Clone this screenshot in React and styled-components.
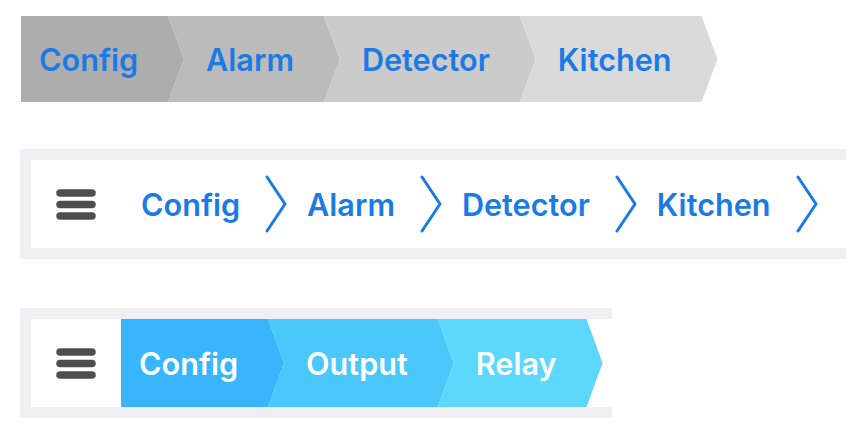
import React from 'react';
import styled, { createGlobalStyle } from 'styled-components';

const GlobalStyle = createGlobalStyle`
    body {
        margin: 0;
        background: #ffffff;
        font-family: Inter, "Liberation Sans", sans-serif;
    }
`;

const Page = styled.div`
    display: flex;
    flex-direction: column;
    align-items: flex-start;
    padding: 16px 0 0 20px;
`;

const ArrowBar = styled.div`
    display: flex;
    height: 86px;
    margin-left: 1px;
`;

const Segment = styled.div`
    display: flex;
    align-items: center;
    background: ${(p) => p.$bg};
    color: ${(p) => p.$color};
    font-size: 30.6px;
    font-weight: 600;
    padding-left: ${(p) => (p.$first ? '18px' : '38px')};
    padding-right: 46px;
    margin-left: ${(p) => (p.$first ? '0' : '-16px')};
    clip-path: ${(p) =>
        p.$first
            ? 'polygon(0 0, calc(100% - 16px) 0, 100% 50%, calc(100% - 16px) 100%, 0 100%)'
            : 'polygon(0 0, calc(100% - 16px) 0, 100% 50%, calc(100% - 16px) 100%, 0 100%, 16px 50%)'};
`;

const Frame = styled.div`
    display: flex;
    width: ${(p) => p.$width}px;
    box-sizing: border-box;
    border: 11px solid #efeff4;
    border-right: 0;
    background: #ffffff;
`;

const Inner = styled.div`
    display: flex;
    align-items: stretch;
    height: 88px;
`;

const MenuBox = styled.div`
    display: flex;
    align-items: center;
    width: 90px;
    padding-left: 25px;
    box-sizing: border-box;
    flex-shrink: 0;
`;

const Crumbs = styled.div`
    display: flex;
    align-items: center;
    padding-left: 20px;
`;

const CrumbText = styled.span`
    color: #1a7ae6;
    font-size: 30.6px;
    font-weight: 600;
`;

const Sep = styled.svg`
    margin: 0 20px 0 25px;
    flex-shrink: 0;
`;

function Hamburger() {
    return (
        <svg width='40' height='31' viewBox='0 0 40 31'>
            <g stroke='#4f4f4f' strokeWidth='7.5' strokeLinecap='round'>
                <line x1='4' y1='4' x2='36' y2='4' />
                <line x1='4' y1='15.5' x2='36' y2='15.5' />
                <line x1='4' y1='27' x2='36' y2='27' />
            </g>
        </svg>
    );
}

function Chevron() {
    return (
        <Sep width='22' height='58' viewBox='0 0 22 58'>
            <path
                d='M2 2 L20 29 L2 56'
                fill='none'
                stroke='#1a7ae6'
                strokeWidth='3'
                strokeLinecap='round'
                strokeLinejoin='round'
            />
        </Sep>
    );
}

const grey = [
    { label: 'Config', bg: '#adadad' },
    { label: 'Alarm', bg: '#bbbbbb' },
    { label: 'Detector', bg: '#cbcbcb' },
    { label: 'Kitchen', bg: '#dadada' },
];

const blue = [
    { label: 'Config', bg: '#38b5fc' },
    { label: 'Output', bg: '#4ac8fc' },
    { label: 'Relay', bg: '#5bd8fb' },
];

export default function App() {
    return (
        <>
            <GlobalStyle />
            <Page>
                <ArrowBar>
                    {grey.map((s, i) => (
                        <Segment key={s.label} $bg={s.bg} $color='#1a7ae6' $first={i === 0}>
                            {s.label}
                        </Segment>
                    ))}
                </ArrowBar>

                <Frame $width={826} style={{ marginTop: 47 }}>
                    <Inner>
                        <MenuBox>
                            <Hamburger />
                        </MenuBox>
                        <Crumbs>
                            {grey.map((s) => (
                                <React.Fragment key={s.label}>
                                    <CrumbText>{s.label}</CrumbText>
                                    <Chevron />
                                </React.Fragment>
                            ))}
                        </Crumbs>
                    </Inner>
                </Frame>

                <Frame $width={592} style={{ marginTop: 49 }}>
                    <Inner>
                        <MenuBox>
                            <Hamburger />
                        </MenuBox>
                        {blue.map((s, i) => (
                            <Segment key={s.label} $bg={s.bg} $color='#ffffff' $first={i === 0}>
                                {s.label}
                            </Segment>
                        ))}
                    </Inner>
                </Frame>
            </Page>
        </>
    );
}
